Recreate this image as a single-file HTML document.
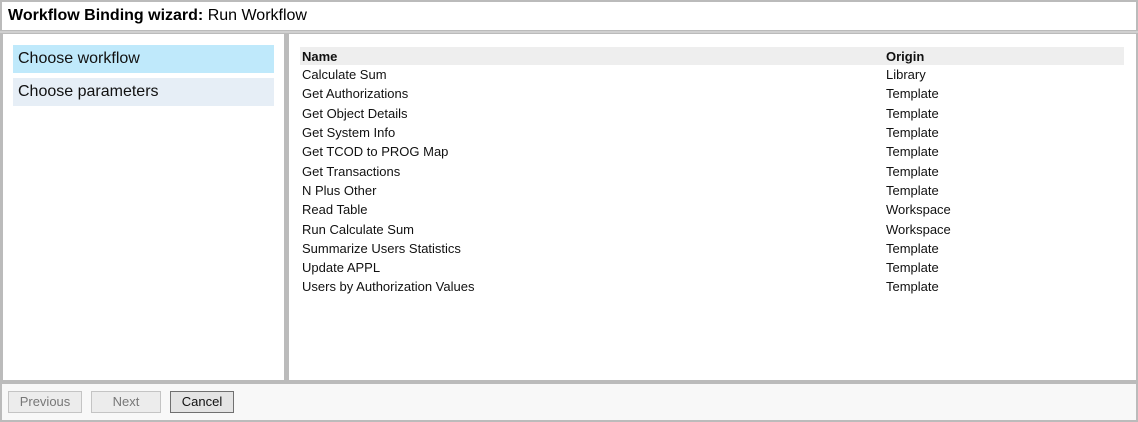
<!DOCTYPE html>
<html><head><style>
*{margin:0;padding:0;box-sizing:border-box}
body{width:1138px;height:422px;background:#bbb;font-family:"Liberation Sans",Arial,sans-serif;position:relative;overflow:hidden}
.title{position:absolute;left:2px;top:2px;width:1134px;height:28px;background:#fff;font-size:16px;line-height:28px;padding-left:6px;color:#000}
.sep{position:absolute;left:0;top:30px;width:1138px;height:4px;background:#d0d0d0;border-top:1px solid #bbb;border-bottom:1px solid #bbb}
.left{position:absolute;left:3px;top:34px;width:281px;height:346px;background:#fff}
.right{position:absolute;left:289px;top:34px;width:847px;height:346px;background:#fff}
.item{position:absolute;left:10px;width:261px;height:28px;font-size:16px;line-height:28px;padding-left:5px;color:#111}
.bottom{position:absolute;left:2px;top:384px;width:1134px;height:36px;background:#f8f8f8}
.btn{position:absolute;top:7px;height:22px;font-size:13px;line-height:20px;text-align:center;border:1px solid #c4c4c4;background:#ececec;color:#777}
table{position:absolute;left:11px;top:13px;width:824px;border-collapse:collapse;font-size:13px;color:#111}
td,th{height:19.3px;padding:0 2px;text-align:left;white-space:nowrap}
th{background:#eee;font-weight:bold;height:18px}
</style></head><body>
<div class="title"><b>Workflow Binding wizard:</b> Run Workflow</div>
<div class="sep"></div>
<div class="left">
<div class="item" style="top:11px;background:#bfe9fb">Choose workflow</div>
<div class="item" style="top:44px;background:#e6eef6">Choose parameters</div>
</div>
<div class="right">
<table>
<tr><th style="width:584px">Name</th><th>Origin</th></tr>
<tr><td>Calculate Sum</td><td>Library</td></tr>
<tr><td>Get Authorizations</td><td>Template</td></tr>
<tr><td>Get Object Details</td><td>Template</td></tr>
<tr><td>Get System Info</td><td>Template</td></tr>
<tr><td>Get TCOD to PROG Map</td><td>Template</td></tr>
<tr><td>Get Transactions</td><td>Template</td></tr>
<tr><td>N Plus Other</td><td>Template</td></tr>
<tr><td>Read Table</td><td>Workspace</td></tr>
<tr><td>Run Calculate Sum</td><td>Workspace</td></tr>
<tr><td>Summarize Users Statistics</td><td>Template</td></tr>
<tr><td>Update APPL</td><td>Template</td></tr>
<tr><td>Users by Authorization Values</td><td>Template</td></tr>
</table>
</div>
<div class="bottom">
<div class="btn" style="left:6px;width:74px">Previous</div>
<div class="btn" style="left:89px;width:70px">Next</div>
<div class="btn" style="left:168px;width:64px;border-color:#707070;background:#e4e4e4;color:#111">Cancel</div>
</div>
</body></html>
